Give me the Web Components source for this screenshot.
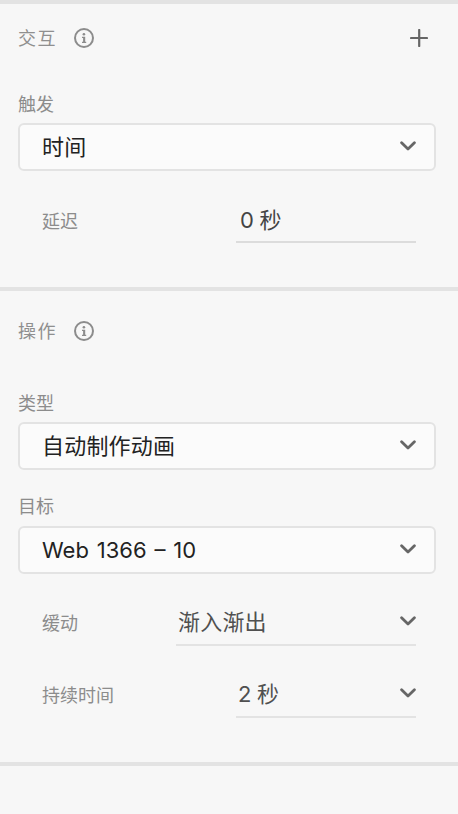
<!DOCTYPE html>
<html lang="zh-CN">
<head>
<meta charset="utf-8">
<title>交互</title>
<style>
body{margin:0;background:#f7f7f7;font-family:Inter,"Noto Sans CJK SC",sans-serif;color:#222}
</style>
</head>
<body>
<inspector-panel>
  <panel-section style="--h:283px;--top:10px">
    <section-header action>交互</section-header>
    <select-field label="触发" style="--gap:31px;--label-gap:6px">时间</select-field>
    <value-row label="延迟" style="--gap:26px;--w:180px;--inset:4px;--line:#dcdcdc;--ink:#444;--word:-1px;--drop:2px;--label-drop:3px">0 秒</value-row>
  </panel-section>
  <panel-section style="--h:471px;--top:16px">
    <section-header>操作</section-header>
    <select-field label="类型" style="--gap:37px;--label-gap:6px">自动制作动画</select-field>
    <select-field label="目标" style="--gap:25px;--label-gap:7px;--track:0;--word:1.7px;--inset:22px">Web 1366 – 10</select-field>
    <value-row menu label="缓动" style="--gap:26px;--w:240px;--inset:2px;--label-drop:2px">渐入渐出</value-row>
    <value-row menu label="持续时间" style="--gap:26px;--w:180px;--inset:2px;--word:-1px;--label-drop:2px">2 秒</value-row>
  </panel-section>
</inspector-panel>
<script>
const define = (name, html) => customElements.define(name, class extends HTMLElement {
  constructor() {
    super();
    const t = document.createElement('template');
    t.innerHTML = html;
    this.attachShadow({mode: 'open'}).append(t.content.cloneNode(true));
    const label = this.shadowRoot.querySelector('.label');
    if (label) label.textContent = this.getAttribute('label');
  }
});

define('chevron-icon', `
<style>:host{display:block;width:16px;height:10px;flex:none;margin-bottom:3px}svg{display:block}</style>
<svg width="16" height="10" viewBox="0 0 16 10"><path d="M1.6 1.7 8 7.9 14.4 1.7" fill="none" stroke="#666" stroke-width="2.8" stroke-linecap="round" stroke-linejoin="round"/></svg>`);

define('info-icon', `
<style>:host{display:block;width:20px;height:20px}svg{display:block}</style>
<svg width="20" height="20" viewBox="0 0 20 20"><circle cx="10" cy="10" r="9" fill="none" stroke="#8c8c8c" stroke-width="2"/><circle cx="9.9" cy="6.3" r="1.3" fill="#8c8c8c"/><path d="M8 8.7h3.2v5h1v1.4H8v-1.4h1.1V10H8z" fill="#8c8c8c"/></svg>`);

define('inspector-panel', `
<style>:host{display:block;border-top:4px solid #e3e3e3;height:810px;background:#f7f7f7;overflow:hidden}</style><slot></slot>`);

define('panel-section', `
<style>:host{display:block;box-sizing:content-box;height:calc(var(--h) - var(--top));padding:var(--top) 22px 0 18px;border-bottom:4px solid #e3e3e3}</style><slot></slot>`);

define('section-header', `
<style>
:host{display:flex;align-items:center;height:48px;font-size:18px;line-height:24px;letter-spacing:1.6px;color:#8f8f8f}
.title{width:56px;padding-top:2px}.plus{display:none;margin-left:auto;margin-right:8px}
:host([action]) .plus{display:block}
</style>
<span class="title"><slot></slot></span><info-icon></info-icon>
<svg class="plus" width="18" height="18" viewBox="0 0 18 18"><path d="M9.2 1v16M1 9h16" stroke="#666" stroke-width="2.2" stroke-linecap="round"/></svg>`);

define('select-field', `
<style>
:host{display:block;margin-top:var(--gap)}
.label{display:block;font-size:18px;line-height:24px;height:24px;color:#8c8c8c}
.box{display:flex;align-items:center;justify-content:space-between;box-sizing:border-box;height:48px;margin-top:var(--label-gap);padding:0 18px 0 var(--inset,22px);border:2px solid #e3e3e3;border-radius:6px;background:#fbfbfb;font-size:22px;line-height:32px;letter-spacing:var(--track,.2px);word-spacing:var(--word,0);color:#222}
</style>
<span class="label"></span><div class="box"><span><slot></slot></span><chevron-icon></chevron-icon></div>`);

define('value-row', `
<style>
:host{display:flex;justify-content:space-between;align-items:flex-start;margin-top:var(--gap);padding:0 20px 0 24px}
.label{font-size:18px;line-height:24px;padding-top:calc(10px + var(--label-drop,1px));color:#8c8c8c}
.value{display:flex;align-items:center;justify-content:space-between;box-sizing:border-box;width:var(--w);height:46px;padding-left:var(--inset);border-bottom:2px solid var(--line,#e3e3e3);font-size:22px;line-height:32px;letter-spacing:.2px;word-spacing:var(--word,0);color:var(--ink,#505050)}
.text{padding-top:var(--drop,0)}
chevron-icon{display:none}:host([menu]) chevron-icon{display:block}
</style>
<span class="label"></span><div class="value"><span class="text"><slot></slot></span><chevron-icon></chevron-icon></div>`);
</script>
</body>
</html>
